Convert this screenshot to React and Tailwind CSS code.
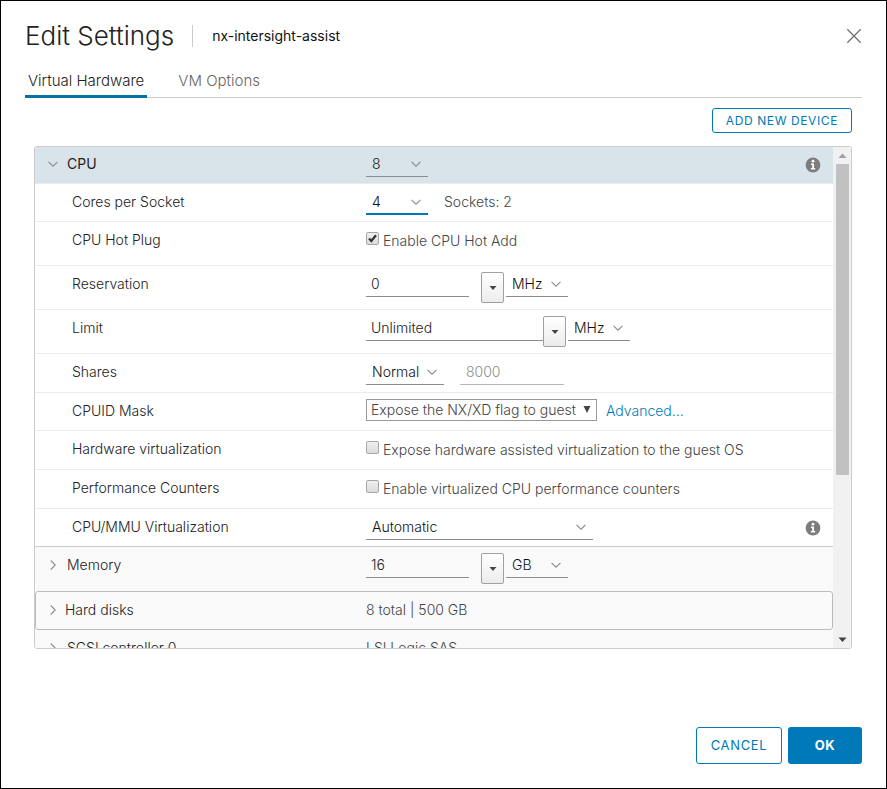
import React, { useState } from 'react';

const Chevron = ({ className = '' }) => (
  <svg viewBox="0 0 12 12" className={`h-3 w-3 fill-none stroke-[#8c8c8c] ${className}`} aria-hidden="true">
    <path d="M1.5 3.8 6 8.2l4.5-4.4" strokeWidth="1.1" />
  </svg>
);

const InfoIcon = () => (
  <svg viewBox="0 0 16 16" className="h-4 w-4" aria-hidden="true">
    <circle cx="8" cy="8" r="7.4" fill="#7d7d7d" />
    <circle cx="8" cy="4.2" r="1.4" fill="#fff" />
    <path d="M6 6.5h3v4.6h1.2v1.4H5.9v-1.4h1.3V7.9H6z" fill="#fff" />
  </svg>
);

const rowHeights = {
  short: 'min-h-[38px]',
  medium: 'min-h-[39px]',
  tall: 'min-h-11',
};

const Row = ({ label, htmlFor, size = 'short', children }) => (
  <div className={`flex items-start border-t border-[#ececec] ${rowHeights[size]}`}>
    <label htmlFor={htmlFor} className="w-[331px] shrink-0 pt-2 pl-[37px] text-[#222]">
      {label}
    </label>
    <div className="flex min-w-0 flex-1 items-start pt-1.5">{children}</div>
  </div>
);

const Toggle = ({ open, className = '', children }) => (
  <button type="button" aria-expanded={open} className={`flex w-[331px] shrink-0 items-center pl-3 text-left ${className}`}>
    <Chevron className={open ? '' : '-rotate-90'} />
    {children}
  </button>
);

const Select = ({ id, label, options, width, focused }) => (
  <span className={`relative block ${width}`}>
    <select
      id={id}
      aria-label={label}
      className={`h-[25px] w-full appearance-none bg-transparent pr-5 pl-[6px] text-[#111] outline-none ${
        focused ? 'border-b-2 border-[#0079b8]' : 'border-b border-[#8c8c8c]'
      }`}
    >
      {options.map((option) => (
        <option key={option}>{option}</option>
      ))}
    </select>
    <Chevron className="pointer-events-none absolute top-1.5 right-1.5" />
  </span>
);

const Field = ({ id, label, value, width }) => (
  <input
    id={id}
    aria-label={label}
    type="text"
    defaultValue={value}
    className={`h-[25px] border-b border-[#8c8c8c] bg-transparent px-[5px] pb-0.5 text-[#222] outline-none ${width}`}
  />
);

const DropButton = ({ label }) => (
  <button
    type="button"
    aria-label={label}
    className="mr-[2px] flex h-[31px] w-[23px] items-center justify-center rounded-xs border border-[#a0a0a0] bg-linear-to-b from-white to-[#ececec]"
  >
    <svg viewBox="0 0 8 4" className="h-1 w-2" aria-hidden="true">
      <path d="M0.5 0h7L4 4z" fill="#444" />
    </svg>
  </button>
);

const Checkbox = ({ id, label, checked: initial = false }) => {
  const [checked, setChecked] = useState(initial);

  return (
    <span className="flex items-start gap-1">
      <span className="relative mt-1 block h-[13px] w-[13px]">
        <input
          id={id}
          type="checkbox"
          checked={checked}
          onChange={(e) => setChecked(e.target.checked)}
          className="block h-[13px] w-[13px] appearance-none rounded-xs border border-[#a6a6a6] bg-linear-to-b from-[#f0f0f0] to-[#dcdcdc]"
        />
        {checked && (
          <svg viewBox="0 0 13 13" className="pointer-events-none absolute inset-0 fill-none stroke-[#333]" aria-hidden="true">
            <path d="M3 6.5 5.3 9 10 3.2" strokeWidth="2.2" />
          </svg>
        )}
      </span>
      <label htmlFor={id} className="pt-[3px]">
        {label}
      </label>
    </span>
  );
};

const ScrollBar = () => (
  <div className="flex w-[18px] shrink-0 flex-col items-center bg-[#f1f1f1]" aria-hidden="true">
    <svg viewBox="0 0 17 17" className="h-[17px] w-[17px] shrink-0">
      <path d="M4.5 11h8l-4-4.5z" fill="#a0a0a0" />
    </svg>
    <div className="min-h-0 w-[13px] flex-1">
      <div className="h-2/3 bg-[#c1c1c1]" />
    </div>
    <svg viewBox="0 0 17 17" className="h-[17px] w-[17px] shrink-0">
      <path d="M4.5 6.5h8l-4 4.5z" fill="#404040" />
    </svg>
  </div>
);

const HardwareList = () => (
  <div className="mr-[10px] ml-[9px] flex min-h-0 flex-1 overflow-hidden rounded-[3px] border border-[#ccc]">
    <div className="min-w-0 flex-1 overflow-y-auto [scrollbar-width:none]">
      <div className="flex h-9 items-start bg-[#d9e4ea]">
        <Toggle open className="gap-2 pt-[7px] font-normal text-[#222]">CPU</Toggle>
        <div className="flex flex-1 items-start justify-between pt-[5px] pr-3">
          <Select label="CPU" options={['8', '4', '2', '1']} width="w-[62px]" />
          <button type="button" aria-label="CPU information" className="mt-[5px]">
            <InfoIcon />
          </button>
        </div>
      </div>

      <Row label="Cores per Socket" htmlFor="cores">
        <Select id="cores" options={['4', '2', '1']} width="w-[62px]" focused />
        <span className="ml-4 pt-[2px]">Sockets: 2</span>
      </Row>
      <Row label="CPU Hot Plug" htmlFor="hot-add" size="tall">
        <Checkbox id="hot-add" label="Enable CPU Hot Add" checked />
      </Row>
      <Row label="Reservation" htmlFor="reservation" size="tall">
        <Field id="reservation" value="0" width="mr-3 w-[103px]" />
        <DropButton label="Reservation presets" />
        <Select label="Reservation unit" options={['MHz', 'GHz']} width="w-[62px]" />
      </Row>
      <Row label="Limit" htmlFor="limit" size="tall">
        <Field id="limit" value="Unlimited" width="w-[177px]" />
        <DropButton label="Limit presets" />
        <Select label="Limit unit" options={['MHz', 'GHz']} width="w-[62px]" />
      </Row>
      <Row label="Shares" htmlFor="shares" size="medium">
        <Select id="shares" options={['Normal', 'Low', 'High', 'Custom']} width="w-[78px]" />
        <input
          type="text"
          aria-label="Shares value"
          value="8000"
          disabled
          className="ml-4 h-[25px] w-[104px] border-b border-[#b5b5b5] bg-transparent px-[6px] pb-0.5 text-[#8c8c8c]"
        />
      </Row>
      <Row label="CPUID Mask" htmlFor="cpuid">
        <span className="relative block w-[231px]">
          <select id="cpuid" className="h-[22px] w-full appearance-none border border-[#999] bg-white pr-4 pl-1">
            <option>Expose the NX/XD flag to guest</option>
            <option>Hide the NX/XD flag from guest</option>
          </select>
          <svg viewBox="0 0 8 7" className="pointer-events-none absolute top-[7px] right-1.5 h-[7px] w-2" aria-hidden="true">
            <path d="M0.5 0h7L4 7z" fill="#444" />
          </svg>
        </span>
        <a href="#advanced" className="ml-[9px] pt-[2px] text-[#0079b8]">Advanced...</a>
      </Row>
      <Row label="Hardware virtualization" htmlFor="hw-virt" size="medium">
        <Checkbox id="hw-virt" label="Expose hardware assisted virtualization to the guest OS" />
      </Row>
      <Row label="Performance Counters" htmlFor="perf" size="medium">
        <Checkbox id="perf" label="Enable virtualized CPU performance counters" />
      </Row>
      <Row label="CPU/MMU Virtualization" htmlFor="mmu">
        <div className="flex flex-1 items-start justify-between pr-3">
          <Select id="mmu" options={['Automatic', 'Software', 'Hardware']} width="w-[227px]" />
          <button type="button" aria-label="Virtualization information" className="mt-[5px]">
            <InfoIcon />
          </button>
        </div>
      </Row>

      <div className="flex h-[45px] items-start border-t border-[#ccc] bg-[#fafafa]">
        <Toggle className="gap-2 pt-2 text-[#222]">Memory</Toggle>
        <div className="flex pt-1.5">
          <Field label="Memory" value="16" width="mr-3 w-[103px]" />
          <DropButton label="Memory presets" />
          <Select label="Memory unit" options={['GB', 'MB']} width="w-[62px]" />
        </div>
      </div>
      <div className="flex h-[39px] items-start rounded-[3px] border border-[#bbb] bg-[#fafafa]">
        <Toggle className="-ml-px gap-1.5 pt-2 text-[#222]">Hard disks</Toggle>
        <span className="pt-2">8 total | 500 GB</span>
      </div>
      <div className="flex h-[39px] items-start bg-[#fafafa]">
        <Toggle className="gap-2 pt-2 text-[#222]">SCSI controller 0</Toggle>
        <span className="pt-2">LSI Logic SAS</span>
      </div>
    </div>
    <ScrollBar />
  </div>
);

const App = () => (
  <main className="flex h-screen flex-col border border-black bg-white px-6 pb-6 font-['Inter',sans-serif] text-sm font-light text-[#444]">
    <header className="flex items-center pt-[19px]">
      <h1 className="text-[26px] leading-8 font-light text-[#222]">Edit Settings</h1>
      <span className="ml-[18px] h-[22px] border-l border-[#ccc] pr-[19px]" />
      <h2 className="text-sm font-normal text-[#111]">nx-intersight-assist</h2>
      <button type="button" aria-label="Close" className="ml-auto">
        <svg viewBox="0 0 16 16" className="h-4 w-4 stroke-[#737373]" aria-hidden="true">
          <path d="M1.3 1.3l13.4 13.4M14.7 1.3 1.3 14.7" strokeWidth="1.3" />
        </svg>
      </button>
    </header>

    <nav className="mt-[15px] flex gap-7 border-b border-[#ccc]">
      <button type="button" className="-mb-px h-[31px] border-b-3 border-[#0072a3] px-[3px] text-[15px] text-[#222]">
        Virtual Hardware
      </button>
      <button type="button" className="-mb-px h-[31px] border-b-3 border-transparent px-[3px] text-[15px] text-[#666]">
        VM Options
      </button>
    </nav>

    <div className="mr-[10px] flex justify-end pt-[10px] pb-[13px]">
      <button type="button" className="h-[25px] rounded-[3px] border border-[#0079b8] px-[13px] text-xs font-normal tracking-wider text-[#0079b8]">
        ADD NEW DEVICE
      </button>
    </div>

    <HardwareList />

    <footer className="flex justify-end gap-[6px] pt-[78px]">
      <button type="button" className="h-[37px] w-[86px] rounded-[3px] border border-[#0079b8] text-[13px] font-normal tracking-wider text-[#0079b8]">
        CANCEL
      </button>
      <button type="button" className="h-[37px] w-[74px] rounded-[3px] bg-[#0079b8] text-[13px] font-bold tracking-wider text-white">
        OK
      </button>
    </footer>
  </main>
);

export default App;
